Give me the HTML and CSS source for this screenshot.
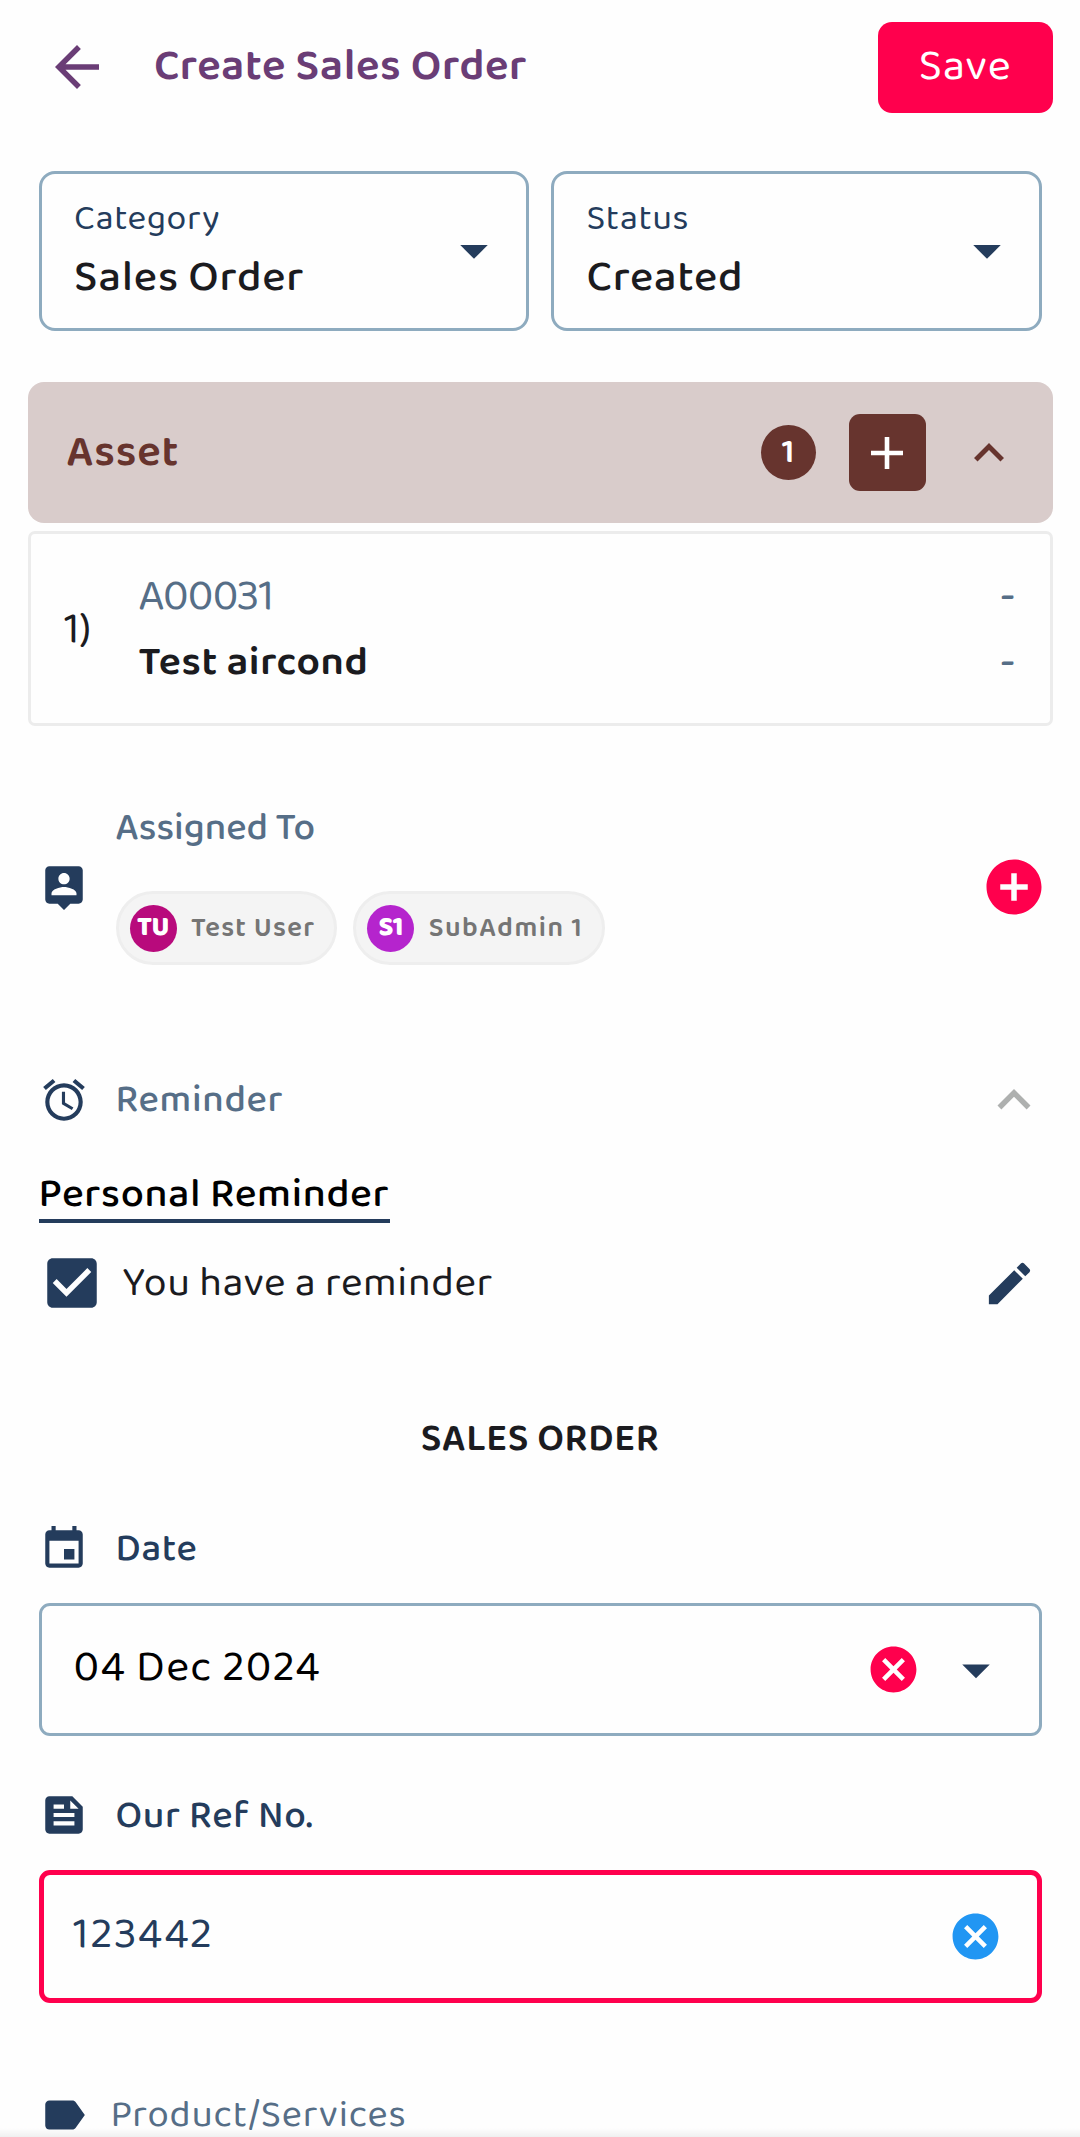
FILE: index.html
```html
<!DOCTYPE html>
<html lang="en">
<head>
<meta charset="utf-8">
<title>Create Sales Order</title>
<link rel="stylesheet" href="styles.css">
</head>
<body>
<header class="topbar">
  <svg class="icon icon-lg back" viewBox="0 0 24 24"><path d="M20 11H7.83l5.59-5.59L12 4l-8 8 8 8 1.41-1.41L7.83 13H20v-2z"/></svg>
  <h1 class="title">Create Sales Order</h1>
  <button class="save">Save</button>
</header>

<main class="form">
  <section class="selects">
    <div class="select">
      <div class="select-text"><span class="select-label">Category</span><span class="select-value">Sales Order</span></div>
      <svg class="icon icon-lg" viewBox="0 0 24 24"><path d="M7 9.85l5 5 5-5z"/></svg>
    </div>
    <div class="select">
      <div class="select-text"><span class="select-label">Status</span><span class="select-value">Created</span></div>
      <svg class="icon icon-lg" viewBox="0 0 24 24"><path d="M7 9.85l5 5 5-5z"/></svg>
    </div>
  </section>

  <section class="asset">
    <div class="asset-head">
      <h2 class="asset-title">Asset</h2>
      <span class="count">1</span>
      <button class="asset-add"><svg class="plus" viewBox="0 0 32 32"><path d="M13.7 0h4.6v13.7H32v4.6H18.3V32h-4.6V18.3H0v-4.6h13.7z"/></svg></button>
      <svg class="icon chevron" viewBox="0 0 24 24"><path d="M12 8l-6 6 1.41 1.41L12 10.83l4.59 4.58L18 14z"/></svg>
    </div>
    <div class="asset-card">
      <span class="asset-index">1)</span>
      <div class="asset-info"><span class="asset-code">A00031</span><span class="asset-name">Test aircond</span></div>
      <div class="asset-extra"><span>-</span><span>-</span></div>
    </div>
  </section>

  <section class="row assigned">
    <svg class="icon" viewBox="0 0 24 24"><path d="M19 2H5c-1.11 0-2 .9-2 2v14c0 1.1.89 2 2 2h4l3 3 3-3h4c1.1 0 2-.9 2-2V4c0-1.1-.9-2-2-2zm-7 3.3c1.49 0 2.7 1.21 2.7 2.7s-1.21 2.7-2.7 2.7S9.3 9.49 9.3 8s1.21-2.7 2.7-2.7zM18 16H6v-.9c0-2 4-3.1 6-3.1s6 1.1 6 3.1v.9z"/></svg>
    <div class="assigned-body">
      <span class="label muted assigned-label">Assigned To</span>
      <div class="chips">
        <span class="chip"><b class="avatar pink">TU</b>Test User</span>
        <span class="chip chip-sub"><b class="avatar purple">S1</b>SubAdmin 1</span>
      </div>
    </div>
    <svg class="icon icon-lg red end" viewBox="0 0 24 24"><path d="M12 2C6.48 2 2 6.48 2 12s4.48 10 10 10 10-4.48 10-10S17.52 2 12 2zm5 11h-4v4h-2v-4H7v-2h4V7h2v4h4v2z"/></svg>
  </section>

  <section class="row reminder">
    <svg class="icon" viewBox="0 0 24 24"><path d="M22 5.72l-4.6-3.86-1.29 1.53 4.6 3.86L22 5.72zM7.88 3.39L6.6 1.86 2 5.71l1.29 1.53 4.59-3.85zM12.5 8H11v6l4.75 2.85.75-1.23-4-2.37V8zM12 4c-4.97 0-9 4.03-9 9s4.02 9 9 9c4.97 0 9-4.03 9-9s-4.03-9-9-9zm0 16c-3.87 0-7-3.13-7-7s3.13-7 7-7 7 3.13 7 7-3.13 7-7 7z"/></svg>
    <span class="label muted">Reminder</span>
    <svg class="icon icon-lg grey end" viewBox="0 0 24 24"><path d="M12 8l-6 6 1.41 1.41L12 10.83l4.59 4.58L18 14z"/></svg>
  </section>

  <h3 class="personal">Personal Reminder</h3>
  <section class="check-row">
    <svg class="icon icon-lg" viewBox="0 0 24 24"><path d="M19 3H5c-1.11 0-2 .9-2 2v14c0 1.1.89 2 2 2h14c1.11 0 2-.9 2-2V5c0-1.1-.89-2-2-2zm-9 14l-5-5 1.41-1.41L10 14.17l7.59-7.59L19 8l-9 9z"/></svg>
    <span class="check-text">You have a reminder</span>
    <svg class="icon pencil" viewBox="0 0 24 24"><path d="M3 17.25V21h3.75L17.81 9.94l-3.75-3.75L3 17.25zM20.71 7.04c.39-.39.39-1.02 0-1.41l-2.34-2.34c-.39-.39-1.02-.39-1.41 0l-1.83 1.83 3.75 3.75 1.83-1.83z"/></svg>
  </section>

  <h2 class="section-title">SALES ORDER</h2>

  <div class="row date-head">
    <svg class="icon" viewBox="0 0 24 24"><path d="M17 12h-5v5h5v-5zM16 1v2H8V1H6v2H5c-1.11 0-1.99.9-1.99 2L3 19c0 1.1.89 2 2 2h14c1.1 0 2-.9 2-2V5c0-1.1-.9-2-2-2h-1V1h-2zm3 18H5V8h14v11z"/></svg>
    <span class="label">Date</span>
  </div>
  <div class="field">
    <span class="field-value">04 Dec 2024</span>
    <svg class="icon clear red" viewBox="0 0 24 24"><path d="M12 2C6.47 2 2 6.47 2 12s4.47 10 10 10 10-4.47 10-10S17.53 2 12 2zm5 13.59L15.59 17 12 13.41 8.41 17 7 15.59 10.59 12 7 8.41 8.41 7 12 10.59 15.59 7 17 8.41 13.41 12 17 15.59z"/></svg>
    <svg class="icon icon-lg" viewBox="0 0 24 24"><path d="M7 10l5 5 5-5z"/></svg>
  </div>

  <div class="row ref-head">
    <svg class="icon" viewBox="0 0 24 24"><path d="M16 3H5c-1.1 0-2 .9-2 2v14c0 1.1.9 2 2 2h14c1.1 0 2-.9 2-2V8l-5-5zM7 7h5v2H7V7zm10 10H7v-2h10v2zm0-4H7v-2h10v2zm-2-4V5l4 4h-4z"/></svg>
    <span class="label ref-label">Our Ref No.</span>
  </div>
  <div class="field focused">
    <span class="field-value ref-value">123442</span>
    <svg class="icon clear blue" viewBox="0 0 24 24"><path d="M12 2C6.47 2 2 6.47 2 12s4.47 10 10 10 10-4.47 10-10S17.53 2 12 2zm5 13.59L15.59 17 12 13.41 8.41 17 7 15.59 10.59 12 7 8.41 8.41 7 12 10.59 15.59 7 17 8.41 13.41 12 17 15.59z"/></svg>
  </div>

  <div class="row product">
    <svg class="icon" viewBox="0 0 24 24"><path d="M17.63 5.84C17.27 5.33 16.67 5 16 5L5 5.01C3.9 5.01 3 5.9 3 7v10c0 1.1.9 1.99 2 1.99L16 19c.67 0 1.27-.33 1.63-.84L22 12l-4.37-6.16z"/></svg>
    <span class="product-label">Product/Services</span>
  </div>
</main>
<div class="bottom-shadow"></div>
</body>
</html>
```
FILE: styles.css
```css
* { box-sizing: border-box; }

body {
  margin: 0;
  height: 2137px;
  overflow: hidden;
  position: relative;
  background: #fefefe;
  color: #1b1b1f;
  font-family: "Baloo 2", "Noto Sans", sans-serif;
}

h1, h2, h3 { margin: 0; }
button { border: 0; padding: 0; font-family: inherit; }
span, h1, h2, h3 { white-space: nowrap; }

.icon { width: 50px; height: 50px; flex: none; fill: #243c5c; }
.icon-lg { width: 66px; height: 66px; }
.red { fill: #ff004d; }
.blue { fill: #2196f3; }
.grey { fill: #aeb0af; }
.end { margin-left: auto; }

.topbar {
  height: 134px;
  display: flex;
  align-items: center;
  padding: 0 27.5px 0 44px;
}
.back { fill: #6a3d76; }
.title {
  margin-left: 44px;
  padding-bottom: 1px;
  font-size: 44px;
  line-height: 60px;
  font-weight: 600;
  letter-spacing: 0.62px;
  color: #6a3d76;
}
.save {
  margin-left: auto;
  width: 175px;
  height: 91px;
  border-radius: 14px;
  background: #ff004d;
  color: #fff;
  font-size: 44px;
  line-height: 60px;
  letter-spacing: 0.9px;
  padding-bottom: 1px;
}

.form { padding: 0 38.5px; }

.selects {
  display: grid;
  grid-template-columns: 1fr 1fr;
  gap: 22px;
  margin-top: 37px;
}
.select {
  height: 160px;
  border: 3px solid #8eabbf;
  border-radius: 16px;
  display: flex;
  align-items: center;
  justify-content: space-between;
  padding: 0 19px 0 32.5px;
}
.select-text { display: flex; flex-direction: column; gap: 13px; padding-bottom: 4px; }
.select-label {
  font-size: 35.75px;
  line-height: 44px;
  letter-spacing: 0.65px;
  color: #243c5c;
}
.select-value {
  font-size: 44px;
  line-height: 48px;
  font-weight: 500;
  letter-spacing: 0.76px;
}

.asset { margin: 51px -11px 0; }
.asset-head {
  height: 141px;
  border-radius: 16px;
  background: #d9cccb;
  display: flex;
  align-items: center;
  padding: 0 34px 0 39px;
}
.asset-title {
  flex: 1;
  font-size: 44px;
  font-weight: 600;
  letter-spacing: 0.8px;
  color: #67342e;
}
.count {
  width: 55px;
  height: 55px;
  line-height: 55px;
  border-radius: 50%;
  background: #67342e;
  color: #fff;
  text-align: center;
  font-size: 34px;
  font-weight: 600;
}
.asset-add {
  width: 77px;
  height: 77px;
  margin: 0 33px;
  border-radius: 11px;
  background: #67342e;
  display: flex;
  align-items: center;
  justify-content: center;
}
.plus { width: 32px; height: 32px; fill: #fff; }
.chevron { width: 60px; height: 60px; fill: #67342e; }

.asset-card {
  height: 195px;
  margin-top: 8px;
  border: 3px solid #ececec;
  border-radius: 7px;
  display: flex;
  align-items: center;
  padding: 2px 34px 0 33.5px;
}
.asset-index { width: 74.5px; font-size: 44px; letter-spacing: -0.2px; }
.asset-info, .asset-extra { display: flex; flex-direction: column; gap: 18px; line-height: 48px; }
.asset-info { flex: 1; }
.asset-code { font-size: 44px; letter-spacing: -0.85px; color: #566e87; }
.asset-name { font-size: 41.25px; font-weight: 600; letter-spacing: 0.6px; }
.asset-extra { font-size: 41.25px; font-weight: 500; color: #566e87; }

.row { display: flex; align-items: center; }
.label {
  margin-left: 27px;
  font-size: 38.5px;
  line-height: 44px;
  font-weight: 500;
  letter-spacing: 0.68px;
  color: #243c5c;
}
.muted { color: #566e87; }

.assigned { margin-top: 83px; height: 156px; }
.assigned-body { margin-left: 27px; }
.assigned-label { display: block; margin: 0; line-height: 39px; letter-spacing: 0; }
.chips { display: flex; gap: 16px; margin-top: 43px; }
.chip {
  height: 74px;
  border: 3px solid #eeeeee;
  border-radius: 37px;
  background: #f4f4f4;
  display: flex;
  align-items: center;
  padding: 0 19px 0 11px;
  font-size: 27.5px;
  line-height: 32px;
  font-weight: 600;
  letter-spacing: 1.2px;
  color: #757575;
}
.chip-sub { letter-spacing: 1.5px; }
.avatar {
  width: 47px;
  height: 47px;
  line-height: 45px;
  margin-right: 14.5px;
  border-radius: 50%;
  color: #fff;
  font-size: 27px;
  text-align: center;
  letter-spacing: -0.5px;
}
.pink { background: #b80a7c; }
.purple { background: #b524cd; }
.assigned .end, .reminder .end { margin-right: -5.5px; }

.reminder { margin-top: 102px; height: 66px; }

.personal {
  width: 351px;
  margin-top: 39px;
  padding-bottom: 1px;
  border-bottom: 4px solid #243c5c;
  font-size: 41.25px;
  line-height: 46px;
  font-weight: 500;
  letter-spacing: 0.65px;
  color: #000;
}
.check-row {
  height: 66px;
  margin-top: 27px;
  display: flex;
  align-items: center;
}
.check-text { margin-left: 18px; padding-top: 2px; font-size: 41.25px; letter-spacing: 0.62px; }
.pencil { width: 55px; height: 55px; margin-left: auto; margin-right: 5px; }

.section-title {
  margin-top: 100px;
  text-align: center;
  font-size: 38.5px;
  line-height: 46px;
  font-weight: 600;
  letter-spacing: 0.61px;
}

.date-head { height: 50px; margin-top: 62px; }
.field {
  height: 133px;
  margin-top: 29px;
  border: 3px solid #8eabbf;
  border-radius: 11px;
  display: flex;
  align-items: center;
  padding: 0 30px 0 32px;
}
.field-value {
  flex: 1;
  padding-bottom: 4px;
  font-size: 44px;
  line-height: 60px;
  letter-spacing: 1.27px;
  color: #000;
}
.clear { width: 55px; height: 55px; }
.field .icon-lg { margin-left: 22px; }

.ref-head { height: 50px; margin-top: 54px; }
.ref-label { padding-top: 2px; }
.focused { margin-top: 30px; border: 5px solid #ff004d; padding: 0 33.5px 0 29.5px; }
.ref-value { letter-spacing: 1.43px; color: #243c5c; }

.product { height: 50px; margin-top: 87px; }
.product-label {
  margin-left: 22px;
  font-size: 38.5px;
  line-height: 44px;
  letter-spacing: 0.81px;
  color: #566e87;
}

.bottom-shadow {
  position: absolute;
  left: 0;
  right: 0;
  bottom: 0;
  height: 9px;
  background: linear-gradient(rgba(0, 0, 0, 0), rgba(0, 0, 0, 0.06));
}
```
